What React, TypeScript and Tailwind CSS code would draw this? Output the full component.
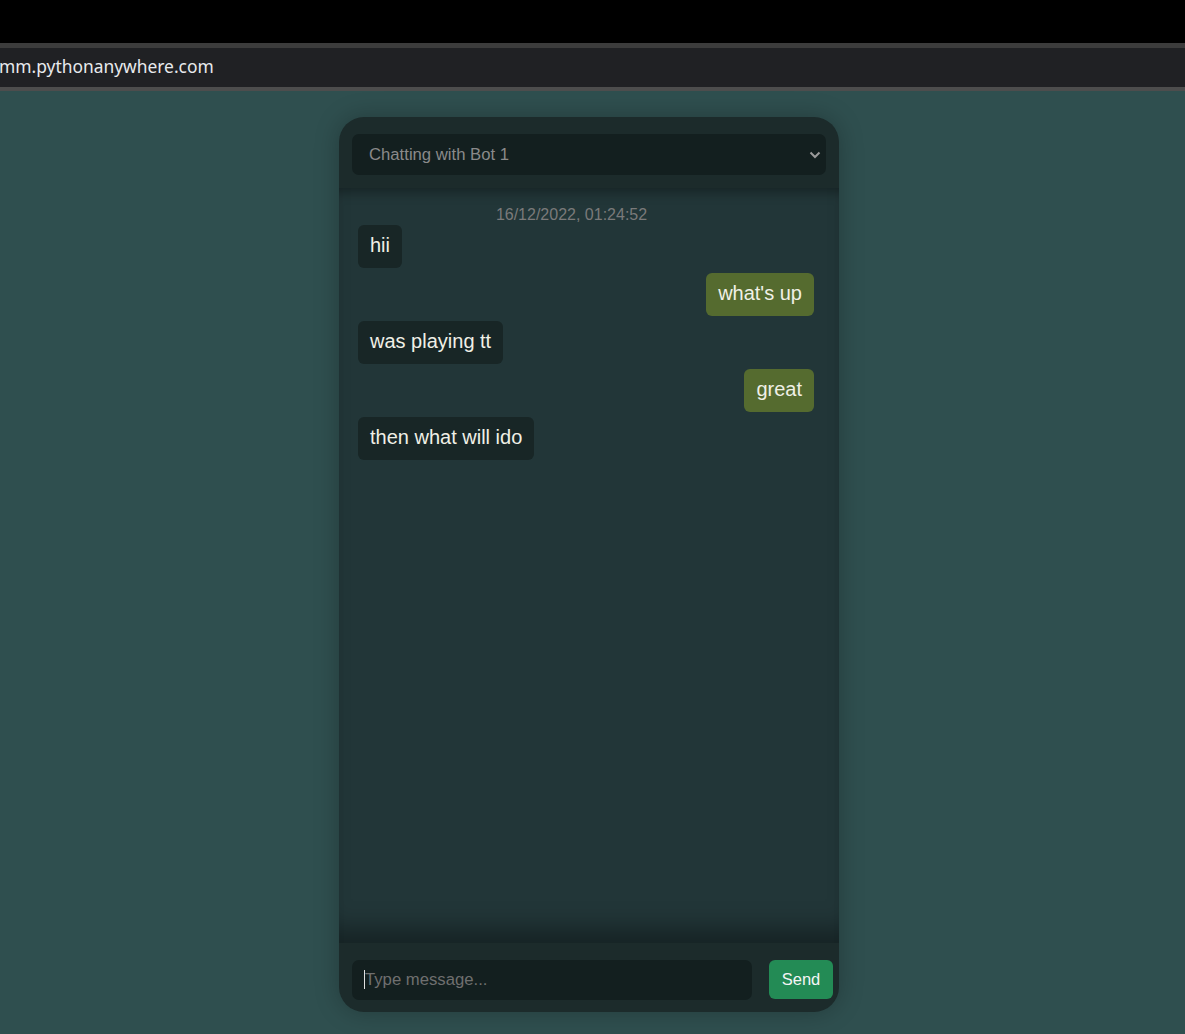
import React from "react";

type Msg = { text: string; me: boolean };

const messages: Msg[] = [
  { text: "hii", me: false },
  { text: "what's up", me: true },
  { text: "was playing tt", me: false },
  { text: "great", me: true },
  { text: "then what will ido", me: false },
];

export default function App() {
  return (
    <div className="h-[1034px] flex flex-col bg-[#2f4f4f] overflow-hidden" style={{ fontFamily: "'Liberation Sans', Arial, sans-serif" }}>
      {/* browser chrome */}
      <div className="h-[43px] bg-black shrink-0" />
      <div className="h-[5px] bg-[#3c3c3c] shrink-0" />
      <div className="h-[39px] bg-[#202124] shrink-0 flex items-center pb-[2px]">
        <span className="text-[17.4px] text-[#e8eaed] -ml-[1px]" style={{ fontFamily: "'Noto Sans', 'Open Sans', sans-serif" }}>
          mm.pythonanywhere.com
        </span>
      </div>
      <div className="h-[4px] bg-[#4d4d4d] shrink-0" />

      {/* page */}
      <div className="flex-1 flex justify-center pt-[26px] pr-[7px]">
        <div className="w-[500px] h-[895px] rounded-[25px] bg-[#1c2b2b] flex flex-col shadow-[0_0_24px_rgba(0,0,0,0.25)] overflow-hidden">
          {/* header select */}
          <div className="mt-[17px] mx-[13px] h-[41px] rounded-[7px] bg-[#131f1f] flex items-center justify-between pl-[17px] pr-[5px]">
            <span className="text-[16.7px] text-[#8a8a8a]">Chatting with Bot 1</span>
            <svg width="12" height="8" viewBox="0 0 12 8" className="mt-[1px]">
              <path d="M1.5 1.5 L6 6 L10.5 1.5" fill="none" stroke="#9a9a9a" strokeWidth="2" />
            </svg>
          </div>

          {/* messages */}
          <div className="mt-[13px] flex-1 bg-[#223638] shadow-[inset_0_12px_12px_-8px_rgba(0,0,0,0.35),inset_0_-30px_25px_-15px_rgba(0,0,0,0.35)] pl-[19px] pr-[25px] pt-[18px] flex flex-col">
            <div className="text-[16px] leading-[18px] text-[#7a7a7a] text-center pr-[29px] mb-[1px]">
              16/12/2022, 01:24:52
            </div>
            <div className="flex flex-col gap-[5px]">
              {messages.map((m, i) => (
                <div key={i} className={m.me ? "flex justify-end" : "flex justify-start"}>
                  <div
                    className={
                      m.me
                        ? "bg-[#556b2f] text-[#f0f0e6] text-[20px] leading-[23px] px-[12px] pt-[9px] pb-[11px] rounded-[6px]"
                        : "bg-[#182626] text-[#f0f0e6] text-[20px] leading-[23px] px-[12px] pt-[9px] pb-[11px] rounded-[6px]"
                    }
                  >
                    {m.text}
                  </div>
                </div>
              ))}
            </div>
          </div>

          {/* input row */}
          <div className="flex items-start pt-[17px] pb-[12px] pl-[13px]">
            <div className="relative w-[400px] h-[40px] rounded-[7px] bg-[#131f1f] flex items-center pl-[13px]">
              <span className="absolute left-[12px] top-[10px] w-[1px] h-[19px] bg-[#e0e0e0]" />
              <span className="text-[16.7px] text-[#6f6f6f]">Type message...</span>
            </div>
            <button className="ml-[17px] w-[64px] h-[39px] rounded-[6px] bg-[#238b55] text-[16.5px] text-[#f5f5f5]">
              Send
            </button>
          </div>
        </div>
      </div>
    </div>
  );
}
